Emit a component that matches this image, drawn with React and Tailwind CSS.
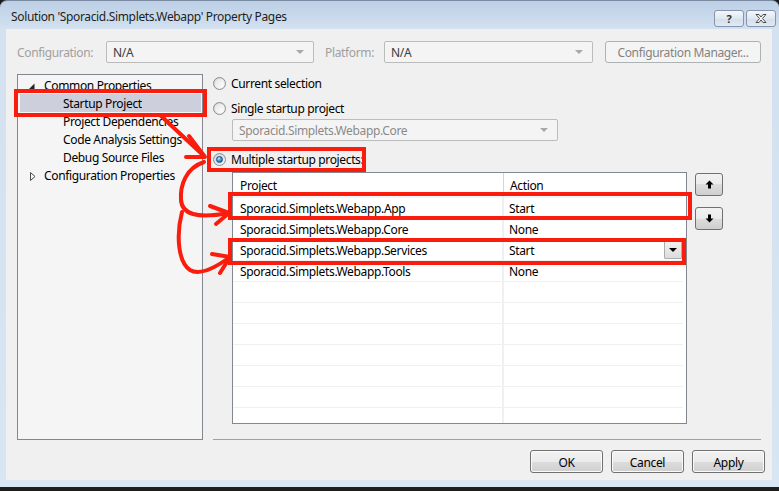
import React from 'react';

function Radio({ checked }) {
    return (
        <span className="w-[13px] h-[13px] rounded-full border border-[#8e8f8f] bg-[linear-gradient(135deg,#cfcfcf,#f7f7f7)] flex items-center justify-center shrink-0">
            {checked ? (
                <span className="w-[7px] h-[7px] rounded-full border border-[#1b4e84] bg-[radial-gradient(circle_at_35%_30%,#bfeeff_0%,#3aa0e0_45%,#0d4c8c_100%)]" />
            ) : (
                <span className="w-[9px] h-[9px] rounded-full bg-[linear-gradient(135deg,#e4e4e4,#ffffff)]" />
            )}
        </span>
    );
}

function Combo({ value, className, textClass }) {
    return (
        <div className={`h-[22px] border border-[#bcbcbc] rounded-[2px] bg-[#f4f4f4] flex items-center pl-[6px] pr-[9px] ${className}`}>
            <span className={`flex-1 relative top-[1px] ${textClass}`}>{value}</span>
            <span className="w-0 h-0 border-l-[4px] border-r-[4px] border-t-[4px] border-l-transparent border-r-transparent border-t-[#a8a8a8]" />
        </div>
    );
}

function Btn({ children }) {
    return (
        <button className="h-[23px] w-[73px] border border-[#707070] rounded-[3px] bg-[linear-gradient(#f2f2f2_0%,#ebebeb_50%,#dddddd_50%,#cfcfcf_100%)] shadow-[inset_0_0_0_1px_#fbfbfb] text-black flex items-center justify-center">
            <span className="relative top-[1px]">{children}</span>
        </button>
    );
}

function TreeRow({ level, arrow, selected, children }) {
    return (
        <div className={`h-[18px] flex items-center ${selected ? 'bg-[#cdd0dc] mr-[1px] ml-[2px] pl-[8px]' : 'pl-[10px]'}`}>
            <span className="w-[16px] flex items-center justify-start">
                {arrow === 'open' && (
                    <svg width="7" height="7" viewBox="0 0 7 7" className="ml-[0px] relative top-[1px]">
                        <path d="M6.5 0.5 L6.5 6.5 L0.5 6.5 Z" fill="#262626" />
                    </svg>
                )}
                {arrow === 'closed' && (
                    <svg width="6" height="9" viewBox="0 0 6 9" className="ml-[2px] relative top-[1px]">
                        <path d="M0.5 0.5 L5 4.5 L0.5 8.5 Z" fill="none" stroke="#4a4a4a" strokeWidth="1" />
                    </svg>
                )}
            </span>
            <span className={`relative top-[1px] ${level === 1 ? 'pl-[19px]' : ''}`}>{children}</span>
        </div>
    );
}

const projects = [
    { name: 'Sporacid.Simplets.Webapp.App', action: 'Start' },
    { name: 'Sporacid.Simplets.Webapp.Core', action: 'None' },
    { name: 'Sporacid.Simplets.Webapp.Services', action: 'Start', dropdown: true },
    { name: 'Sporacid.Simplets.Webapp.Tools', action: 'None' },
];

export default function App() {
    return (
        <div className="relative w-[779px] h-[491px] bg-[#1c1c1c] overflow-hidden font-['Segoe_UI','Noto_Sans',sans-serif] text-[12px] tracking-[-0.35px] text-black">
            {/* window frame */}
            <div className="h-[487px] rounded-tl-[7px] rounded-tr-[7px] border-t border-[#7a8aa0] bg-[linear-gradient(#bccfe5_0px,#d3e1f0_28px,#d8e5f3_100%)] flex flex-col pl-[6px] pr-[7px] pb-[7px]">
                {/* title bar */}
                <div className="h-[28px] flex items-start">
                    <span className="pl-[5px] pt-[8px] leading-[16px] text-[#1e1e1e]">Solution 'Sporacid.Simplets.Webapp' Property Pages</span>
                    <div className="ml-auto flex gap-[2px] mt-[9px] mr-[-4px]">
                        <div className="w-[30px] h-[17px] rounded-[3px] border border-[#8595ad] bg-[linear-gradient(#f4f7fb,#dfe7f1_50%,#d2deeb_51%,#e2eaf3)] flex items-center justify-center text-[11px] leading-none text-[#333] font-bold">?</div>
                        <div className="w-[30px] h-[17px] rounded-[3px] border border-[#8595ad] bg-[linear-gradient(#f4f7fb,#dfe7f1_50%,#d2deeb_51%,#e2eaf3)] flex items-center justify-center">
                            <svg width="12" height="9" viewBox="0 0 12 9">
                                <path d="M1 0.5 L4 0.5 L6 3 L8 0.5 L11 0.5 L7.5 4.5 L11 8.5 L8 8.5 L6 6 L4 8.5 L1 8.5 L4.5 4.5 Z" fill="#f4f4f4" stroke="#3c3c3c" strokeWidth="0.9" />
                            </svg>
                        </div>
                    </div>
                </div>

                {/* client area */}
                <div className="flex-1 bg-[#f0f0f0] flex flex-col">
                    {/* configuration row */}
                    <div className="flex items-center pt-[12px] pl-[11px]">
                        <span className="w-[89px] text-[#a0a0a0] relative top-[1px]">Configuration:</span>
                        <Combo value="N/A" className="w-[208px]" textClass="text-[#3c3c3c]" />
                        <span className="w-[59px] ml-[11px] text-[#a0a0a0] relative top-[1px]">Platform:</span>
                        <Combo value="N/A" className="w-[209px]" textClass="text-[#3c3c3c]" />
                        <div className="ml-[12px] w-[156px] h-[22px] rounded-[3px] border border-[#adb2b5] bg-[#f4f4f4] flex items-center justify-center text-[#838383]">
                            <span className="relative top-[1px]">Configuration Manager...</span>
                        </div>
                    </div>

                    {/* main row */}
                    <div className="flex pl-[11px] mt-[11px]">
                        {/* tree */}
                        <div className="w-[186px] h-[366px] border border-[#828790] bg-[#f5f5f5] pt-[1px]">
                            <TreeRow arrow="open">Common Properties</TreeRow>
                            <TreeRow level={1} selected>Startup Project</TreeRow>
                            <TreeRow level={1}>Project Dependencies</TreeRow>
                            <TreeRow level={1}>Code Analysis Settings</TreeRow>
                            <TreeRow level={1}>Debug Source Files</TreeRow>
                            <TreeRow arrow="closed">Configuration Properties</TreeRow>
                        </div>

                        {/* right side */}
                        <div className="flex-1 ml-[10px] flex flex-col">
                            <div className="h-[18px] flex items-center gap-[5px]">
                                <Radio />
                                <span className="relative top-[1px]">Current selection</span>
                            </div>
                            <div className="h-[18px] mt-[7px] flex items-center gap-[5px]">
                                <Radio />
                                <span className="relative top-[1px]">Single startup project</span>
                            </div>
                            <Combo value="Sporacid.Simplets.Webapp.Core" className="w-[326px] ml-[19px] mt-[2px]" textClass="text-[#8a8a8a]" />
                            <div className="h-[18px] mt-[9px] flex items-center gap-[5px]">
                                <Radio checked />
                                <span className="relative top-[1px]">Multiple startup projects:</span>
                            </div>

                            <div className="flex mt-[4px] ml-[19px]">
                                {/* grid */}
                                <div className="w-[455px] h-[252px] border border-[#828790] bg-white overflow-hidden pr-[3px]">
                                    <div className="h-[25px] flex items-center border-b border-[#f3f3f3] bg-[linear-gradient(#ffffff,#ffffff_70%,#f5f6f7)]">
                                        <span className="w-[271px] pl-[7px] border-r border-[#d5d5d5] h-full flex items-center pt-[2px]">Project</span>
                                        <span className="pl-[6px] pt-[2px]">Action</span>
                                    </div>
                                    {projects.map((p) => (
                                        <div key={p.name} className="h-[21px] flex border-b border-[#eef0f2]">
                                            <span className="w-[271px] pl-[7px] pt-[1px] flex items-center border-r-2 border-[#eef0f2]">{p.name}</span>
                                            <span className="flex-1 pl-[5px] pt-[1px] flex items-center">{p.action}</span>
                                            {p.dropdown && (
                                                <span className="w-[18px] h-[18px] mt-[1px] mr-[1px] border border-[#acacac] rounded-[1px] bg-[linear-gradient(#f2f2f2,#dcdcdc)] flex items-center justify-center">
                                                    <span className="w-0 h-0 border-l-[4px] border-r-[4px] border-t-[4px] border-l-transparent border-r-transparent border-t-black" />
                                                </span>
                                            )}
                                        </div>
                                    ))}
                                    {[0, 1, 2, 3, 4, 5, 6, 7].map((i) => (
                                        <div key={i} className="h-[21px] flex border-b border-[#eef0f2]">
                                            <span className="w-[271px] border-r-2 border-[#eef0f2]" />
                                            <span className="flex-1" />
                                        </div>
                                    ))}
                                </div>

                                {/* move buttons */}
                                <div className="ml-[8px] flex flex-col gap-[11px] pt-[1px]">
                                    <div className="w-[28px] h-[23px] border border-[#707070] rounded-[3px] bg-[linear-gradient(#f2f2f2_0%,#ebebeb_50%,#dddddd_50%,#cfcfcf_100%)] flex items-center justify-center">
                                        <svg width="9" height="9" viewBox="0 0 9 9">
                                            <path d="M4.5 0.5 L8.5 4.5 L6 4.5 L6 8.5 L3 8.5 L3 4.5 L0.5 4.5 Z" fill="#000" />
                                        </svg>
                                    </div>
                                    <div className="w-[28px] h-[23px] border border-[#707070] rounded-[3px] bg-[linear-gradient(#f2f2f2_0%,#ebebeb_50%,#dddddd_50%,#cfcfcf_100%)] flex items-center justify-center">
                                        <svg width="9" height="9" viewBox="0 0 9 9">
                                            <path d="M4.5 8.5 L8.5 4.5 L6 4.5 L6 0.5 L3 0.5 L3 4.5 L0.5 4.5 Z" fill="#000" />
                                        </svg>
                                    </div>
                                </div>
                            </div>

                            <div className="mt-auto mr-[11px] border-t border-[#a0a0a0] h-[2px] translate-y-[1px]" />
                        </div>
                    </div>

                    {/* dialog buttons */}
                    <div className="flex justify-end gap-[8px] pr-[7px] mt-[10px]">
                        <Btn>OK</Btn>
                        <Btn>Cancel</Btn>
                        <Btn>Apply</Btn>
                    </div>
                </div>
            </div>

            {/* red annotations */}
            <svg className="absolute inset-0 pointer-events-none" width="779" height="491" viewBox="0 0 779 491">
                <g fill="none" stroke="#fa1c0c" strokeWidth="4" strokeLinecap="round" strokeLinejoin="round">
                    <rect x="16" y="91" width="189" height="24" strokeLinecap="butt" strokeLinejoin="miter" />
                    <rect x="209" y="149" width="155" height="21" strokeLinecap="butt" strokeLinejoin="miter" />
                    <rect x="230" y="194" width="460" height="24" strokeLinecap="butt" strokeLinejoin="miter" />
                    <rect x="230" y="240" width="454" height="23" strokeLinecap="butt" strokeLinejoin="miter" />
                    <path d="M160 115 L204 156" />
                    <path d="M189 136 L205 157 L186 157" />
                    <path d="M204 162 C186 168, 180 185, 181 200 C182 214, 196 219, 229 213" />
                    <path d="M210 206 L229 213 L216 224" />
                    <path d="M182 212 C176 235, 178 262, 190 270 C200 276, 215 268, 230 257" />
                    <path d="M212 254 L230 257 L220 273" />
                </g>
            </svg>
        </div>
    );
}
